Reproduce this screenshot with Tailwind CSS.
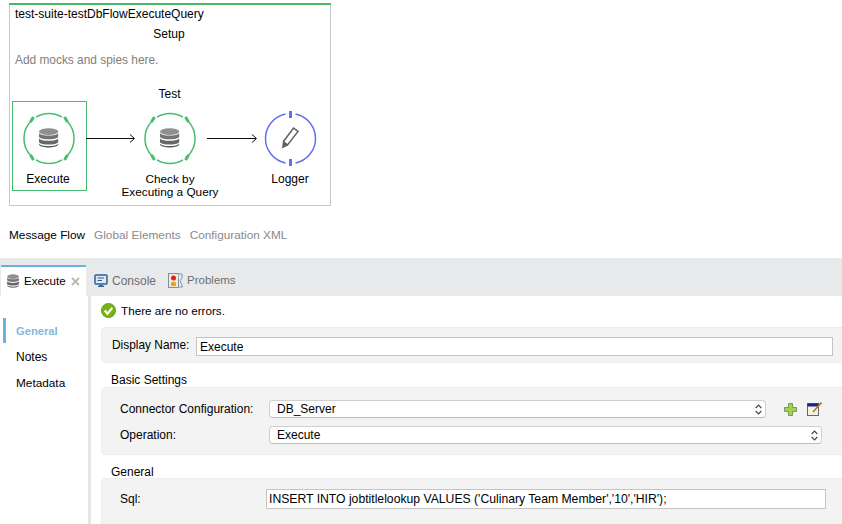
<!DOCTYPE html>
<html lang="en">
<head>
<meta charset="UTF-8">
<title>test-suite-testDbFlowExecuteQuery</title>
<script src="https://cdn.jsdelivr.net/npm/@tailwindcss/browser@4"></script>
</head>
<body class="bg-white w-[842px] h-[524px] overflow-hidden font-['Liberation_Sans',sans-serif] text-[12px] text-[#1a1a1a]">

<svg width="0" height="0" class="absolute">
  <defs>
    <g id="db">
      <ellipse cx="8" cy="3.500" rx="8" ry="3.200" fill="#8f8f8f"/>
      <path d="M0 5C2 8 14 8 16 5V8.500C14 11.500 2 11.500 0 8.500Z" fill="#737373"/>
      <path d="M0 10C2 13 14 13 16 10V13.500C14 16.500 2 16.500 0 13.500Z" fill="#666"/>
      <path d="M0 15C2 18 14 18 16 15V16C14 19.500 2 19.500 0 16Z" fill="#5a5a5a"/>
    </g>
    <g id="dbNode">
      <path d="M-13 -21.400A25 25 0 0 1 13 -21.400M17.700 -17.700A25 25 0 0 1 17.700 17.700M13 21.400A25 25 0 0 1 -13 21.400M-17.700 17.700A25 25 0 0 1 -17.700 -17.700" fill="none" stroke="#46bd6e" stroke-width="1.500"/>
      <path d="M15.500 -21.500L18.500 -16.500M-15.500 -21.500L-18.500 -16.500M15.500 21.500L18.500 16.500M-15.500 21.500L-18.500 16.500" fill="none" stroke="#46bd6e" stroke-width="3"/>
      <use href="#db" transform="translate(-10 -10.500) scale(1.2 1.05)"/>
    </g>
    <path id="updown" d="M0.700 4L3.500 1L6.300 4M0.700 7L3.500 10L6.300 7" fill="none" stroke="#444" stroke-width="1.100"/>
  </defs>
</svg>

<!-- flow canvas -->
<div class="h-[258px] relative">
  <div class="absolute left-[9px] top-[3px] w-[322px] h-[203px] border border-[#c8c8c8] border-t-0">
    <div class="h-[2px] -mx-px bg-[#4bb964]"></div>
    <div class="pl-[5px] pt-[1px] h-[18px] leading-[16px] text-black">test-suite-testDbFlowExecuteQuery</div>
    <div class="text-center leading-[14px] mt-[4px] pr-[2px] text-black">Setup</div>
    <div class="pl-[5px] mt-[12px] leading-[14px] text-[11.900px] text-[#808080]">Add mocks and spies here.</div>
    <div class="text-center leading-[14px] mt-[20px] pr-[1px] text-black">Test</div>

    <svg class="absolute left-0 top-0" width="320" height="200" viewBox="10 3 320 200">
      <rect x="12.500" y="101.500" width="74" height="89" fill="none" stroke="#46bd6e"/>
      <use href="#dbNode" transform="translate(49 138.500)"/>
      <use href="#dbNode" transform="translate(170 138.500)"/>
      <path d="M86 138.500H134M130 134.500L134.500 138.500L130 142.500M207 138.500H256M252 134.500L256.500 138.500L252 142.500" fill="none" stroke="#111" stroke-width="1"/>
      <path d="M295.500 114A25 25 0 0 1 295.500 163M285.500 163A25 25 0 0 1 285.500 114" fill="none" stroke="#6270ee" stroke-width="1.500"/>
      <path d="M289 111H292V118H289ZM289 159H292V166H289Z" fill="#6270ee"/>
      <path d="M293.500 128L298 131.500L287.500 145L283.500 141.500Z" fill="none" stroke="#5f5f5f" stroke-width="1.500"/>
      <path d="M283 141L288 145.500L282 148.500Z" fill="#5f5f5f"/>
    </svg>
    <div class="absolute left-[-2px] top-[170px] w-[78px] text-center leading-[13px] text-black pl-[2px]">Execute</div>
    <div class="absolute left-[100px] top-[170px] w-[120px] text-center leading-[13px] text-[11.800px] text-black">Check by<br>Executing a Query</div>
    <div class="absolute left-[250px] top-[170px] w-[60px] text-center leading-[13px] text-black">Logger</div>
  </div>
  <div class="absolute left-[9px] top-[228px] flex gap-[9px] leading-[14px] text-[11.800px] text-[#8a8a8a]">
    <span class="text-black">Message Flow</span>
    <span>Global Elements</span>
    <span>Configuration XML</span>
  </div>
</div>

<!-- tab bar -->
<div class="h-[38px] bg-[#e8e9eb] flex items-end pl-[1px]">
  <div class="w-[85px] h-[31px] bg-white border-t-2 border-[#69b4dd] flex items-center pl-[6px]">
    <svg class="mb-[2px]" width="12" height="14" viewBox="0 0 16 19"><use href="#db"/></svg>
    <span class="ml-[5px] text-[11.500px] text-black">Execute</span>
    <svg class="ml-[5px]" width="9" height="9" viewBox="0 0 9 9"><path d="M1 1L8 8M8 1L1 8" stroke="#b8b8b8" stroke-width="1.800"/></svg>
  </div>
  <div class="h-[31px] flex items-center pl-[8px] text-[#6e6e6e]">
    <svg width="14" height="14" viewBox="0 0 14 14"><rect x="1" y="1" width="12" height="9" rx="1" fill="#dfe8f2" stroke="#2f5f95" stroke-width="1.500"/><path d="M3.500 4H10M3.500 6.500H8" stroke="#2f5f95"/><path d="M4 13H10V12L8 11H6L4 12Z" fill="#2f5f95"/></svg>
    <span class="ml-[4px]">Console</span>
    <svg class="ml-[12px]" width="15" height="15" viewBox="0 0 15 15"><rect x="0.500" y="0.500" width="10" height="14" fill="#f2ead8" stroke="#7f8fa8"/><path d="M10.500 1H14V5L12 7.500L14.500 14H11.500" fill="#e8eef6" stroke="#7f8fa8"/><circle cx="5.500" cy="5" r="2.500" fill="#d8232a"/><path d="M3 13V10.500C3 8 8 8 8 10.500V13Z" fill="#f0a020"/></svg>
    <span class="ml-[4px] pt-[1px] text-[11.500px]">Problems</span>
  </div>
</div>

<!-- properties -->
<div class="flex h-[228px]">
  <div class="w-[88px] shrink-0 pl-[3px] pt-[22px]">
    <div class="h-[25px] border-l-[3px] border-[#69b4dd] pl-[10px] pt-[2px] flex items-center font-bold text-[11.200px] text-[#7fb9dc]">General</div>
    <div class="h-[26px] pl-[13px] pt-[2px] flex items-center text-black">Notes</div>
    <div class="h-[26px] pl-[13px] pt-[3px] flex items-center text-[11.800px] text-black">Metadata</div>
  </div>
  <div class="w-[3px] shrink-0 bg-[#e6e6e6]"></div>
  <div class="flex-1 pl-[10px] overflow-hidden">
    <div class="h-[31px] flex items-center pb-[2px]">
      <svg width="15" height="15" viewBox="0 0 14 14"><circle cx="7" cy="7" r="6.600" fill="#7ab317" stroke="#4f8a10" stroke-width="0.700"/><path d="M3.500 7L6 10L10.500 4.500" fill="none" stroke="#fff" stroke-width="2"/></svg>
      <span class="ml-[5px] text-[11.700px] text-black">There are no errors.</span>
    </div>
    <div class="h-[36px] bg-[#f3f3f3] border border-[#ececec] border-r-0 rounded-l-[5px] flex items-center pl-[10px] pt-[2px]">
      <span class="w-[84px] text-[11.900px] text-black">Display Name:</span>
      <div class="w-[637px] h-[19px] bg-white border border-[#c4c4c4] pl-[3px] leading-[18px] text-black">Execute</div>
    </div>

    <div class="h-[24px] pl-[10px] pt-[10px] leading-[14px] text-black">Basic Settings</div>
    <div class="h-[68px] bg-[#f3f3f3] border border-[#ececec] border-r-0 rounded-l-[5px] pl-[18px] pt-[12px]">
      <div class="flex items-center h-[18px]">
        <span class="w-[149px] text-black">Connector Configuration:</span>
        <div class="w-[497px] h-[18px] bg-white border border-[#cfcfcf] border-b-[#bcbcbc] rounded-[4px] pl-[7px] flex items-center justify-between text-black">
          DB_Server
          <svg class="mr-[3px]" width="7" height="11" viewBox="0 0 7 11"><use href="#updown"/></svg>
        </div>
        <svg class="ml-[18px]" width="13" height="13" viewBox="0 0 13 13"><path d="M4.500 0.500H8.500V4.500H12.500V8.500H8.500V12.500H4.500V8.500H0.500V4.500H4.500Z" fill="#a9cd45" stroke="#6f9a6a"/></svg>
        <svg class="ml-[10px]" width="15" height="14" viewBox="0 0 15 14"><rect x="0.500" y="1.500" width="11" height="12" fill="#f6f2e2" stroke="#666"/><rect x="0.500" y="1.500" width="11" height="3" fill="#20208c"/><path d="M14.500 0.500L6 10" stroke="#b8791f" stroke-width="1.600"/></svg>
      </div>
      <div class="flex items-center h-[18px] mt-[8px]">
        <span class="w-[149px] text-black">Operation:</span>
        <div class="w-[553px] h-[18px] bg-white border border-[#cfcfcf] border-b-[#bcbcbc] rounded-[4px] pl-[7px] flex items-center justify-between text-black">
          Execute
          <svg class="mr-[3px]" width="7" height="11" viewBox="0 0 7 11"><use href="#updown"/></svg>
        </div>
      </div>
    </div>

    <div class="h-[23px] pl-[10px] pt-[10px] leading-[14px] text-black">General</div>
    <div class="h-[60px] bg-[#f3f3f3] border border-[#ececec] border-r-0 rounded-l-[5px] pl-[18px] pt-[10px]">
      <div class="flex items-center h-[20px]">
        <span class="w-[146px] text-black">Sql:</span>
        <div class="w-[560px] h-[20px] bg-white border border-[#c4c4c4] pl-[2px] leading-[18px] text-[12.200px] text-black whitespace-nowrap">INSERT INTO jobtitlelookup VALUES ('Culinary Team Member','10','HIR');</div>
      </div>
    </div>
  </div>
</div>
</body>
</html>
